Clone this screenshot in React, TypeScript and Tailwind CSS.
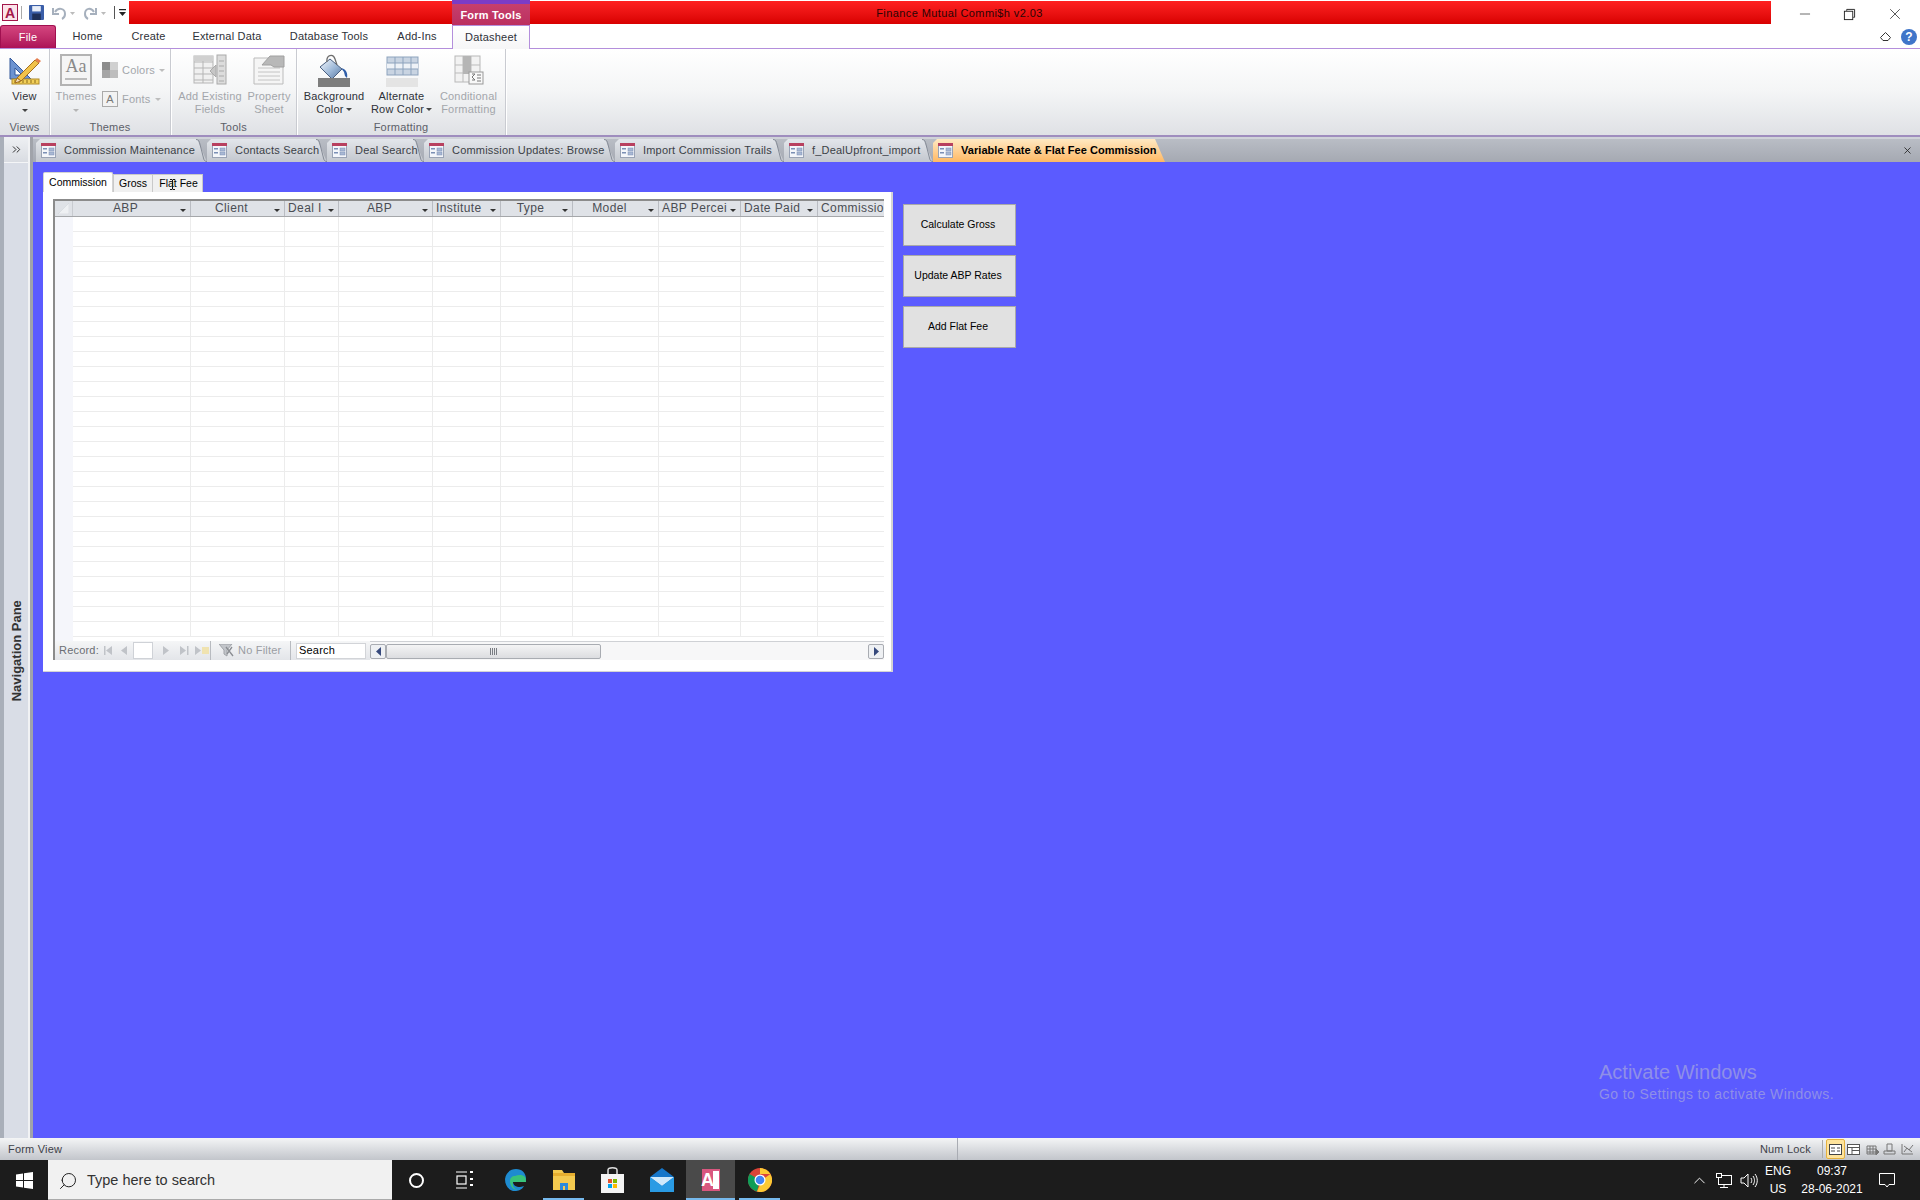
import { ChevronUp, ChevronsRight, Search as SearchIcon, X, Minus } from "lucide-react";

const font = "font-['Liberation_Sans',sans-serif]";

const docTabs = [
  { label: "Commission Maintenance", width: "w-[171px]" },
  { label: "Contacts Search", width: "w-[120px]" },
  { label: "Deal Search", width: "w-[97px]" },
  { label: "Commission Updates: Browse", width: "w-[191px]" },
  { label: "Import Commission Trails", width: "w-[169px]" },
  { label: "f_DealUpfront_import", width: "w-[149px]" },
];

const columns = [
  { label: "ABP", width: "w-[118px]", center: true, arrow: true },
  { label: "Client", width: "w-[94px]", center: true, arrow: true },
  { label: "Deal I", width: "w-[54px]", center: false, arrow: true },
  { label: "ABP", width: "w-[94px]", center: true, arrow: true },
  { label: "Institute", width: "w-[68px]", center: false, arrow: true },
  { label: "Type", width: "w-[72px]", center: true, arrow: true },
  { label: "Model", width: "w-[86px]", center: true, arrow: true },
  { label: "ABP Percei", width: "w-[82px]", center: false, arrow: true },
  { label: "Date Paid", width: "w-[77px]", center: false, arrow: true },
  { label: "Commissio", width: "w-[66px]", center: false, arrow: false },
];

const rows = Array.from({ length: 28 }, (_, i) => i);

function FormIcon() {
  return (
    <svg width="15" height="15" viewBox="0 0 15 15" className="shrink-0">
      <rect x="0.5" y="0.5" width="14" height="14" fill="#f4f6fa" stroke="#9aa3b5" />
      <rect x="0" y="0" width="15" height="3" fill="#b8405f" />
      <rect x="2" y="5" width="4" height="1.5" fill="#7b8fb5" />
      <rect x="2" y="9" width="4" height="1.5" fill="#7b8fb5" />
      <rect x="8" y="5" width="5" height="3" fill="#a9b8d4" stroke="#7b8fb5" strokeWidth="0.5" />
      <rect x="8" y="9" width="5" height="3" fill="#a9b8d4" stroke="#7b8fb5" strokeWidth="0.5" />
    </svg>
  );
}

function SmallDown({ color = "#444" }: { color?: string }) {
  return (
    <svg width="6" height="3" viewBox="0 0 6 3" className="shrink-0">
      <path d="M0 0h6L3 3z" fill={color} />
    </svg>
  );
}

function DocTab({ label, width }: { label: string; width: string }) {
  return (
    <div className={`relative h-[23px] ${width} shrink-0`}>
      <div className="flex h-full items-center gap-[8px] bg-gradient-to-b from-[#e3e6eb] to-[#c3c7ce] pl-[5px] [clip-path:polygon(4px_0,calc(100%-10px)_0,100%_100%,0_100%,0_4px)]">
        <FormIcon />
        <span className="whitespace-nowrap text-[#3b3f46]">{label}</span>
      </div>
      <svg className="absolute right-0 top-0 h-full w-[11px]" viewBox="0 0 11 23">
        <path d="M0 .5c2 0 3 1 3.500 3l4 15.500c.5 2.500 1.500 3.500 3.500 3.500" fill="none" stroke="#858b96" />
      </svg>
    </div>
  );
}

function RibbonText({ lines, muted }: { lines: string[]; muted?: boolean }) {
  return (
    <div className={`flex flex-col items-center leading-[13px] ${muted ? "text-[#a3a6ab]" : "text-[#2e3138]"}`}>
      {lines.map((l) => (
        <span key={l} className="whitespace-nowrap">{l}</span>
      ))}
    </div>
  );
}

function RibbonGroup({ label, width, children }: { label: string; width: string; children: React.ReactNode }) {
  return (
    <div className={`flex h-full ${width} shrink-0 flex-col border-r border-[#c9cbd1] shadow-[1px_0_0_#fff]`}>
      <div className="flex h-[70px] items-start">{children}</div>
      <div className="flex h-[16px] items-center justify-center text-[#5c6068]">{label}</div>
    </div>
  );
}

function ViewIcon() {
  return (
    <svg width="32" height="30" viewBox="0 0 32 30">
      <path d="M1 3v21h21z" fill="#6c93d1" stroke="#33589b" />
      <path d="M6 13v7h7z" fill="#fff" stroke="#33589b" />
      <rect x="3" y="24" width="27" height="5" fill="#f2cf58" stroke="#b08a27" />
      <path d="M6 25v3M10 25v3M14 25v3M18 25v3M22 25v3M26 25v3" stroke="#8a6a1b" />
      <path d="M8 23 26 5l4 3-18 18z" fill="#f0c24a" stroke="#a66f1c" />
      <path d="M26 5l2-2 4 3-2 2z" fill="#e57d4e" />
      <path d="M8 23l-2 5 6-2z" fill="#f4dfbe" stroke="#a66f1c" />
    </svg>
  );
}

function AddFieldsIcon() {
  return (
    <svg width="34" height="32" viewBox="0 0 34 32">
      <rect x="1" y="2" width="19" height="27" fill="#f0f0f0" stroke="#b5b5b5" />
      <path d="M1 8h19M1 14h19M1 20h19M1 26h19M10 2v27" stroke="#b5b5b5" />
      <rect x="1" y="2" width="19" height="5" fill="#d0d0d0" />
      <rect x="24" y="1" width="9" height="29" fill="#dcdcdc" stroke="#aaa" />
      <path d="M26 7h5M26 12h5M26 17h5M26 22h5M26 27h5" stroke="#aaa" />
      <path d="M23 11v12l-6-6z" fill="#c6c6c6" stroke="#aaa" />
    </svg>
  );
}

function PropertySheetIcon() {
  return (
    <svg width="32" height="32" viewBox="0 0 32 32">
      <path d="M1 4h29v26H1z" fill="#f5f5f5" stroke="#bbb" />
      <path d="M5 14h22M5 18h22M5 22h22M5 26h22" stroke="#c4c4c4" />
      <path d="M9 11 17 2h14v11H21l-3-2z" fill="#b8b8b8" stroke="#a0a0a0" />
    </svg>
  );
}

function BucketIcon() {
  return (
    <svg width="34" height="33" viewBox="0 0 34 33">
      <defs>
        <linearGradient id="bucket" x1="0" y1="0" x2="1" y2="1">
          <stop offset="0" stopColor="#f5f8fc" />
          <stop offset="0.55" stopColor="#9db8d8" />
          <stop offset="1" stopColor="#54749f" />
        </linearGradient>
      </defs>
      <path d="M24 14c5 1 7 5 6 10l-2-2-1-4z" fill="#2f5ea8" />
      <path d="M3 13 13 5l12 10-10 10z" fill="url(#bucket)" stroke="#4a5f80" />
      <path d="M10 8C9 1 16-1 18 5l2 6" fill="none" stroke="#6d6d6d" strokeWidth="1.300" />
      <rect x="1" y="24" width="32" height="9" fill="#7d7d7d" />
    </svg>
  );
}

function AltRowIcon() {
  return (
    <svg width="34" height="33" viewBox="0 0 34 33">
      <rect x="2" y="3" width="31" height="18" fill="#c9d4e2" stroke="#8da3bd" />
      <rect x="2" y="9" width="31" height="6" fill="#eef2f7" />
      <path d="M2 9h31M2 15h31M10 3v18M18 3v18M26 3v18" stroke="#8da3bd" />
      <rect x="1" y="24" width="32" height="9" fill="#e4e4e4" />
    </svg>
  );
}

function ConditionalIcon() {
  return (
    <svg width="30" height="30" viewBox="0 0 30 30">
      <rect x="1" y="1" width="25" height="26" fill="#f2f2f2" stroke="#b8b8b8" />
      <path d="M1 10h25M1 18h25M9 1v26M17 1v26" stroke="#bbb" />
      <rect x="9" y="1" width="8" height="18" fill="#b5b5b5" />
      <rect x="15" y="17" width="14" height="12" fill="#f8f8f8" stroke="#999" />
      <path d="M18 19h3l-3 3 3 3h-3M23 20h4M23 23h4M23 26h4" fill="none" stroke="#777" />
    </svg>
  );
}

function ThemesIcon() {
  return (
    <div className="flex h-[32px] w-[32px] flex-col items-center justify-start border-2 border-[#b3b3b3] bg-[#f5f5f5] font-['Liberation_Serif',serif] text-[18px] leading-[21px] tracking-normal text-[#8a8a8a]">
      Aa
      <div className="mt-[1px] h-[2px] w-[22px] bg-[#bdbdbd]" />
    </div>
  );
}

function IconBox({ children }: { children: React.ReactNode }) {
  return <div className="flex h-[36px] items-start justify-center">{children}</div>;
}

function Ribbon() {
  return (
    <div className="flex h-[86px] bg-gradient-to-b from-[#ffffff] via-[#f4f5f6] to-[#dfe1e5]">
      <RibbonGroup label="Views" width="w-[50px]">
        <div className="flex w-[49px] flex-col items-center pt-[6px]">
          <div className="h-[35px]"><ViewIcon /></div>
          <div className="leading-[13px] text-[#2e3138]">View</div>
          <div className="mt-[6px]"><SmallDown /></div>
        </div>
      </RibbonGroup>
      <RibbonGroup label="Themes" width="w-[121px]">
        <div className="flex w-[52px] flex-col items-center pt-[5px]">
          <IconBox><ThemesIcon /></IconBox>
          <div className="leading-[13px] text-[#a3a6ab]">Themes</div>
          <div className="mt-[6px]"><SmallDown color="#b5b5b5" /></div>
        </div>
        <div className="flex flex-col gap-[13px] pt-[13px] leading-[16px] text-[#a3a6ab]">
          <div className="flex items-center gap-[4px]">
            <span className="grid h-[16px] w-[16px] grid-cols-2 grid-rows-2">
              <i className="bg-[#8c8c8c]" /><i className="bg-[#d0d0d0]" /><i className="bg-[#a6a6a6]" /><i className="bg-[#bdbdbd]" />
            </span>
            Colors <SmallDown color="#bdbdbd" />
          </div>
          <div className="flex items-center gap-[4px]">
            <span className="flex h-[16px] w-[16px] items-center justify-center border border-[#aaa] bg-[#f2f2f2] text-[#777]">A</span>
            Fonts <SmallDown color="#bdbdbd" />
          </div>
        </div>
      </RibbonGroup>
      <RibbonGroup label="Tools" width="w-[126px]">
        <div className="flex w-[78px] flex-col items-center pt-[5px]">
          <IconBox><AddFieldsIcon /></IconBox>
          <RibbonText lines={["Add Existing", "Fields"]} muted />
        </div>
        <div className="flex w-[40px] flex-col items-center pt-[5px]">
          <IconBox><PropertySheetIcon /></IconBox>
          <RibbonText lines={["Property", "Sheet"]} muted />
        </div>
      </RibbonGroup>
      <RibbonGroup label="Formatting" width="w-[209px]">
        <div className="flex w-[74px] flex-col items-center pt-[5px]">
          <IconBox><BucketIcon /></IconBox>
          <div className="flex flex-col items-center leading-[13px] text-[#2e3138]">
            <span className="whitespace-nowrap">Background</span>
            <span className="flex items-center gap-[2px]">Color <SmallDown /></span>
          </div>
        </div>
        <div className="flex w-[61px] flex-col items-center pt-[5px]">
          <IconBox><AltRowIcon /></IconBox>
          <div className="flex flex-col items-center leading-[13px] text-[#2e3138]">
            <span className="whitespace-nowrap">Alternate</span>
            <span className="flex items-center gap-[2px] whitespace-nowrap">Row Color <SmallDown /></span>
          </div>
        </div>
        <div className="flex w-[73px] flex-col items-center pt-[6px]">
          <div className="h-[35px]"><ConditionalIcon /></div>
          <RibbonText lines={["Conditional", "Formatting"]} muted />
        </div>
      </RibbonGroup>
    </div>
  );
}

function TitleRow() {
  return (
    <div className="flex h-[25px] items-start bg-white">
      <div className="flex h-[25px] w-[129px] shrink-0 items-center pl-[2px]">
        <span className="flex h-[17px] w-[16px] items-center justify-center border border-[#a3174a] bg-[#fbe3ea] text-[14px] font-bold leading-none tracking-normal text-[#a3174a]">A</span>
        <span className="ml-[3px] h-[13px] w-px bg-[#aaa]" />
        <svg className="ml-[7px]" width="15" height="15" viewBox="0 0 14 14"><rect width="14" height="14" rx="1" fill="#3a5ea8" /><rect x="3" y="1" width="8" height="5" fill="#e8eef8" /><rect x="3" y="8" width="8" height="6" fill="#1e2f57" /></svg>
        <svg className="ml-[8px]" width="24" height="14" viewBox="0 0 24 14"><path d="M3 6c3-5 10-4 10 2 0 2-1 4-3 5M1 2v6h6" fill="none" stroke="#a6b0bd" strokeWidth="2" /><path d="M18 6h5l-2.500 3z" fill="#bbb" /></svg>
        <svg className="ml-[7px]" width="24" height="14" viewBox="0 0 24 14"><path d="M11 6C8 1 2 2 2 8c0 2 1 4 3 5M13 2v6H7" fill="none" stroke="#a6b0bd" strokeWidth="2" /><path d="M18 6h5l-2.500 3z" fill="#bbb" /></svg>
        <span className="ml-[7px] h-[13px] w-px bg-[#555]" />
        <svg className="ml-[4px]" width="7" height="8" viewBox="0 0 7 8"><path d="M0 0h7v1.300H0zM0 3h7L3.500 7z" fill="#222" /></svg>
      </div>
      <div className="mt-[1px] flex h-[23px] w-[323px] shrink-0 bg-gradient-to-b from-[#ff2020] to-[#d80000]" />
      <div className="flex h-[25px] w-[78px] shrink-0 flex-col bg-gradient-to-b from-[#c8426f] to-[#bb2f5f]">
        <div className="h-[4px] bg-[#7b3cc6]" />
        <div className="flex flex-1 items-center justify-center pt-[2px] font-bold text-white">Form Tools</div>
      </div>
      <div className="mt-[1px] flex h-[23px] w-[1241px] shrink-0 items-center justify-center bg-gradient-to-b from-[#ff2020] to-[#d80000] pr-[382px] pt-[1px] tracking-[0.4px] text-[#2a0505]">
        Finance Mutual Commi$h v2.03
      </div>
      <div className="flex flex-1 items-center justify-end gap-[30px] pr-[16px] pt-[5px] text-[#222]">
        <Minus size={16} strokeWidth={1} />
        <svg width="13" height="13" viewBox="0 0 14 14" fill="none" stroke="#222"><rect x="1.500" y="3.500" width="9" height="9" /><path d="M4 3V1.500h8.500V10H11" /></svg>
        <X size={18} strokeWidth={1} />
      </div>
    </div>
  );
}

function MenuRow() {
  const items = [
    { label: "Home", width: "w-[63px]" },
    { label: "Create", width: "w-[59px]" },
    { label: "External Data", width: "w-[98px]" },
    { label: "Database Tools", width: "w-[106px]" },
    { label: "Add-Ins", width: "w-[70px]" },
  ];
  return (
    <div className="flex h-[24px] items-stretch border-b border-[#b48fdc] bg-white text-[#2e3138]">
      <div className="flex w-[56px] items-center justify-center rounded-t-[3px] border border-b-0 border-[#a01050] bg-gradient-to-b from-[#d4447f] to-[#ad1057] text-white">File</div>
      {items.map((t) => (
        <div key={t.label} className={`flex ${t.width} items-center justify-center`}>{t.label}</div>
      ))}
      <div className="-mb-px flex w-[78px] items-center justify-center border-x border-t border-[#b48fdc] bg-gradient-to-b from-[#ffffff] to-[#f6f6f7]">Datasheet</div>
      <div className="flex flex-1 items-center justify-end gap-[10px] pr-[3px]">
        <svg width="11" height="9" viewBox="0 0 11 9" fill="none" stroke="#333"><path d="M.500 5.500l5-5 5 5-2.500 3H3z" /></svg>
        <span className="flex h-[16px] w-[16px] items-center justify-center rounded-full bg-[#3f75c9] text-[12px] font-bold text-white">?</span>
      </div>
    </div>
  );
}

function TabStrip() {
  return (
    <div className="flex h-[23px] items-stretch bg-gradient-to-b from-[#b9bdc5] to-[#a5a9b2] pl-[3px]">
      {docTabs.map((t) => (
        <DocTab key={t.label} label={t.label} width={t.width} />
      ))}
      <div className="relative h-[23px] w-[232px] shrink-0">
        <div className="flex h-full items-center gap-[8px] bg-gradient-to-b from-[#ffe9c2] to-[#ffb861] pl-[5px] [clip-path:polygon(4px_0,calc(100%-10px)_0,100%_100%,0_100%,0_4px)]">
          <FormIcon />
          <span className="whitespace-nowrap font-bold tracking-[0.05px] text-black">Variable Rate &amp; Flat Fee Commission</span>
        </div>
      </div>
      <div className="flex flex-1 items-center justify-end pr-[7px] text-[#222]">
        <X size={11} strokeWidth={1.8} />
      </div>
    </div>
  );
}

function NavPane() {
  return (
    <div className="flex w-[33px] shrink-0 flex-col border-r-[3px] border-[#a0a3aa] bg-[#d9dde6] shadow-[inset_4px_0_0_#a9afb9,inset_-2px_0_0_#f1f2f4]">
      <div className="ml-[4px] flex h-[26px] w-[24px] items-center justify-center border-b border-[#f4f5f7] bg-gradient-to-b from-[#eef0f3] to-[#d9dce2] text-[#222]">
        <ChevronsRight size={13} strokeWidth={1.7} />
      </div>
      <div className="flex flex-1 items-center justify-center pl-[3px]">
        <span className="-rotate-90 whitespace-nowrap text-[13px] font-bold tracking-normal text-[#333]">Navigation Pane</span>
      </div>
    </div>
  );
}

function Datasheet() {
  return (
    <div className="flex h-[461px] flex-col border-l-2 border-t-2 border-[#8b8b8b]">
      <div className="flex h-[16px] shrink-0 border-b border-[#a5a7aa] bg-[#dfe2e7] text-[12px] leading-[15px] tracking-[0.4px] text-[#4a4d53]">
        <div className="relative w-[18px] shrink-0 border-r border-[#c8cbd0]">
          <svg className="absolute left-[3px] top-[2px]" width="11" height="11" viewBox="0 0 11 11"><path d="M11 0v11H0z" fill="#eef0f3" stroke="#cfd2d7" strokeWidth="0.5" /></svg>
        </div>
        {columns.map((c, i) => (
          <div key={i} className={`flex ${c.width} shrink-0 items-center overflow-hidden border-r border-[#b9bcc2] pl-[3px] pr-[4px] last:border-r-0`}>
            <span className={`flex-1 whitespace-nowrap ${c.center ? "pr-[5px] text-center" : ""}`}>{c.label}</span>
            {c.arrow && <div className="pt-[3px]"><SmallDown color="#333" /></div>}
          </div>
        ))}
      </div>
      <div className="flex min-h-0 flex-1 overflow-hidden">
        <div className="w-[18px] shrink-0 bg-[#f5f6fb]" />
        <div className="min-w-0 flex-1">
          {rows.map((r) => (
            <div key={r} className="flex h-[15px] border-b border-[#ececec]">
              {columns.map((c, i) => (
                <div key={i} className={`${c.width} shrink-0 border-r border-[#ececec] last:border-r-0`} />
              ))}
            </div>
          ))}
        </div>
      </div>
      <RecordBar />
    </div>
  );
}

function RecordBar() {
  return (
    <div className="flex h-[19px] shrink-0 items-center bg-gradient-to-b from-[#f5f6f7] to-[#e3e5e9] text-[#6b6e74]">
      <span className="w-[49px] pl-[4px]">Record:</span>
      <svg width="24" height="9" viewBox="0 0 24 9" fill="#c0c3c8"><path d="M0 0h1.500v9H0zM8 0v9L2 4.500zM23 0v9l-6-4.500z" /></svg>
      <div className="ml-[5px] mr-[10px] h-[17px] w-[20px] border border-[#cfd2d7] bg-white" />
      <svg width="46" height="9" viewBox="0 0 46 9" fill="#c0c3c8"><path d="M0 0v9l6-4.500zM17 0v9l6-4.500zM24 0h1.500v9H24zM32 0v9l6-4.500z" /><rect x="39" y="1" width="7" height="7" fill="#f0e3b0" /></svg>
      <div className="ml-px flex h-full w-[81px] items-center gap-[4px] border-x border-[#b8bbc0] pl-[8px] text-[#9a9da3]">
        <svg width="15" height="13" viewBox="0 0 15 13"><path d="M0 0h13L8 6v6L5 10V6z" fill="#c2c5ca" stroke="#a0a3a8" /><path d="M7 3l7 9M13 3l-5 7" stroke="#8a8d92" strokeWidth="1.300" /></svg>
        No Filter
      </div>
      <div className="ml-[5px] flex h-[16px] w-[70px] items-center border border-[#d2d4d8] bg-white pl-[2px] text-black">Search</div>
      <div className="ml-[4px] flex h-full flex-1 items-center border-t border-[#cfd1d5] bg-[#f7f7f8]">
        <div className="flex h-[15px] w-[16px] shrink-0 items-center justify-center rounded-[2px] border border-[#a9acb2] bg-[#eef0f3]">
          <svg width="5" height="9" viewBox="0 0 5 9"><path d="M5 0v9L0 4.500z" fill="#36497c" /></svg>
        </div>
        <div className="flex h-[15px] w-[215px] shrink-0 items-center justify-center rounded-[2px] border border-[#a9acb2] bg-gradient-to-b from-[#f4f4f5] to-[#dcdde0]">
          <svg width="8" height="7" viewBox="0 0 8 7" stroke="#7a7d83"><path d="M.500 0v7M2.500 0v7M4.500 0v7M6.500 0v7" /></svg>
        </div>
        <div className="flex-1" />
        <div className="flex h-[15px] w-[16px] shrink-0 items-center justify-center rounded-[2px] border border-[#a9acb2] bg-[#eef0f3]">
          <svg width="5" height="9" viewBox="0 0 5 9"><path d="M0 0v9l5-4.500z" fill="#36497c" /></svg>
        </div>
      </div>
    </div>
  );
}

function FormTabs() {
  return (
    <div className="flex h-[20px] items-end text-[10.500px] tracking-normal text-black">
      <div className="flex h-[20px] w-[70px] items-center justify-center rounded-t-[2px] border border-b-0 border-[#d4d4d4] bg-white">Commission</div>
      <div className="flex h-[18px] w-[40px] items-center justify-center border border-b-0 border-[#c9c9c9] bg-[#f0f0f0] pt-[1px]">Gross</div>
      <div className="relative flex h-[18px] w-[50px] items-center justify-center border border-b-0 border-l-0 border-[#c9c9c9] bg-[#f0f0f0] pl-[2px] pt-[1px]">
        Flat Fee
        <svg className="absolute left-[17px] top-[4px]" width="5" height="11" viewBox="0 0 5 11" fill="none" stroke="#111"><path d="M0 .5h2l.5.500.5-.500h2M2.500 1v9M0 10.500h2l.5-.500.5.500h2" /></svg>
      </div>
    </div>
  );
}

function ActionButton({ label }: { label: string }) {
  return (
    <button className="flex h-[42px] w-[113px] items-center justify-center border border-[#a9a9a9] bg-[#e1e1e1] pr-[3px] text-[10.500px] tracking-normal text-black">{label}</button>
  );
}

function TaskIcon({ children, active, underline }: { children: React.ReactNode; active?: boolean; underline?: boolean }) {
  return (
    <div className={`relative flex w-[49px] items-center justify-center ${active ? "bg-[#4a4a4a]" : ""}`}>
      {children}
      {underline && <span className={`absolute bottom-0 h-[2px] bg-[#76b9ed] ${active ? "inset-x-0" : "inset-x-[4px]"}`} />}
    </div>
  );
}

function Taskbar() {
  return (
    <div className="flex h-[40px] items-stretch bg-[#1c1c1c] tracking-normal text-white">
      <div className="flex w-[48px] items-center justify-center">
        <svg width="17" height="17" viewBox="0 0 17 17" fill="#fff"><path d="M0 2.400 7 1.400v6.600H0zM8 1.300 17 0v8H8zM0 9h7v6.600l-7-1zM8 9h9v8l-9-1.300z" /></svg>
      </div>
      <div className="flex w-[344px] items-center gap-[9px] border-b border-[#aaa] bg-[#f1f1f1] pl-[10px] pt-[3px] text-[14.500px] text-[#333]">
        <SearchIcon size={20} strokeWidth={1.2} className="-scale-x-100 text-[#222]" />
        Type here to search
      </div>
      <div className="flex w-[48px] items-center justify-center">
        <span className="h-[15px] w-[15px] rounded-full border-[2.500px] border-white" />
      </div>
      <div className="mr-[2px] flex w-[48px] items-center justify-center">
        <svg width="17" height="18" viewBox="0 0 17 18" fill="none" stroke="#fff" strokeWidth="1.200"><path d="M0 1h11M0 17h11" /><rect x="1" y="5" width="9" height="8" /><path d="M14 1h3M14 8h3M14 14h3" strokeWidth="2" /></svg>
      </div>
      <TaskIcon>
        <svg width="24" height="24" viewBox="0 0 24 24"><path d="M2 11C3 4 8 1 13 1c6 0 10 4 10 10 0 2-2 3-5 3H10c0 3 3 5 7 5 2 0 3-1 4-1-2 4-6 5-9 5-6 0-10-5-10-12z" fill="#1e8bd0" /><path d="M12 8c-3 0-5 2-5 5 0 5 3 9 8 9-4-1-6-4-5-8h13c0-2 0-3-1-5-3-3-7-2-10-1z" fill="#39c37a" /></svg>
      </TaskIcon>
      <TaskIcon underline>
        <svg width="24" height="22" viewBox="0 0 24 22"><path d="M1 1h9l2 3h11v17H1z" fill="#f3c94f" /><rect x="1" y="4" width="22" height="3" fill="#e6ae2f" /><path d="M8 21v-7h8v7h-3v-4h-2v4z" fill="#2b89d9" /></svg>
      </TaskIcon>
      <TaskIcon>
        <svg width="24" height="26" viewBox="0 0 24 26"><rect y="7" width="23" height="19" fill="#f4f4f4" /><path d="M7 7V3c0-3 9-3 9 0v4" fill="none" stroke="#ddd" strokeWidth="1.500" /><rect x="7" y="12" width="4" height="4" fill="#e2522f" /><rect x="12" y="12" width="4" height="4" fill="#7fba00" /><rect x="7" y="17" width="4" height="4" fill="#00a4ef" /><rect x="12" y="17" width="4" height="4" fill="#ffb900" /></svg>
      </TaskIcon>
      <TaskIcon>
        <svg width="24" height="24" viewBox="0 0 24 24"><path d="M0 9 12 0l12 9v15H0z" fill="#1576c9" /><path d="M0 9h24l-12 9z" fill="#cfe9fb" /><path d="M0 9l12 9 12-9v15H0z" fill="#2a9be4" /></svg>
      </TaskIcon>
      <TaskIcon active underline>
        <svg width="22" height="24" viewBox="0 0 22 24"><rect x="2" y="1" width="18" height="22" fill="#d9577f" /><rect x="13" y="3" width="6" height="18" fill="#fff" /><text x="1" y="18" fontFamily="Liberation Sans" fontSize="18" fontWeight="700" fill="#fff">A</text></svg>
      </TaskIcon>
      <TaskIcon underline>
        <svg width="24" height="24" viewBox="0 0 24 24"><circle cx="12" cy="12" r="12" fill="#db4437" /><path d="M12 12 1.500 6A12 12 0 0 0 9 23.600z" fill="#0f9d58" /><path d="M12 0a12 12 0 0 1 10.400 6H12zM22.400 6A12 12 0 0 1 9 23.600L14 12z" fill="#fcc934" /><circle cx="12" cy="12" r="5.500" fill="#fff" /><circle cx="12" cy="12" r="4.300" fill="#4285f4" /></svg>
      </TaskIcon>
      <div className="flex-1" />
      <div className="flex items-center pr-[25px]">
        <ChevronUp size={19} strokeWidth={1.2} />
        <svg className="ml-[7px]" width="16" height="15" viewBox="0 0 16 15" fill="none" stroke="#fff"><rect x="2.500" y="2.500" width="13" height="9" /><path d="M8 12v2M4 14.500h8" /><rect x="0.500" y="0.500" width="5" height="4" fill="#1c1c1c" /></svg>
        <svg className="ml-[8px]" width="18" height="15" viewBox="0 0 18 15" fill="none" stroke="#fff"><path d="M1 5h3l4-4v13l-4-4H1zM11 5c1 2 1 3 0 5M13 3c2 3 2 6 0 9M15 1c3 4 3 9 0 13" /></svg>
        <div className="ml-[5px] flex w-[30px] flex-col items-center text-[12px] leading-[18px]">
          <span>ENG</span>
          <span>US</span>
        </div>
        <div className="ml-[2px] flex w-[74px] flex-col items-center text-[12px] leading-[18px]">
          <span>09:37</span>
          <span>28-06-2021</span>
        </div>
        <svg className="ml-[10px]" width="16" height="15" viewBox="0 0 16 15" fill="none" stroke="#fff"><path d="M.500.500h15v11H10L8 14l-2-2.500H.500z" /></svg>
      </div>
    </div>
  );
}

function StatusBar() {
  return (
    <div className="flex h-[22px] items-center bg-gradient-to-b from-[#f4f5f6] to-[#c2c5cb] text-[#3e4148]">
      <span className="flex h-full w-[958px] items-center border-r border-[#a9acb3] pl-[8px]">Form View</span>
      <div className="flex-1" />
      <span className="pr-[11px]">Num Lock</span>
      <div className="mr-[3px] h-[18px] w-px bg-[#aaa]" />
      <div className="flex items-center pr-[6px]">
        <span className="flex h-[20px] w-[19px] items-center justify-center rounded-[2px] border border-[#e5b13e] bg-[#ffe49c]">
          <svg width="13" height="11" viewBox="0 0 13 11" fill="none" stroke="#444"><rect x=".500" y=".500" width="12" height="10" fill="#fff" /><path d="M2 4h4M2 7h4M8 4h3M8 7h3" /></svg>
        </span>
        <svg className="ml-[2px]" width="13" height="11" viewBox="0 0 13 11" fill="none" stroke="#555"><rect x=".500" y=".500" width="12" height="10" fill="#fff" /><path d="M1 3.500h11M5 3v7M5 6.500h7" /></svg>
        <svg className="ml-[6px]" width="13" height="12" viewBox="0 0 13 12" fill="none" stroke="#777"><path d="M1 3h9v8H1zM1 6h9M1 9h9M4 3v8M7 3v8" /><path d="M10 6l3 3-3 3z" fill="#777" /></svg>
        <svg className="ml-[4px]" width="13" height="12" viewBox="0 0 13 12" fill="none" stroke="#777"><path d="M4 1h5v7H4zM1 8h11v3H1z" /></svg>
        <svg className="ml-[5px]" width="13" height="12" viewBox="0 0 13 12" fill="none" stroke="#777"><path d="M1 1v10h11M3 9l3-4 2 2 4-5M3 3l8 6" /></svg>
      </div>
    </div>
  );
}

export default function App() {
  return (
    <div className={`relative flex h-[1200px] w-[1920px] flex-col overflow-hidden bg-[#5b5bff] text-[11px] tracking-[0.2px] ${font}`}>
      <TitleRow />
      <MenuRow />
      <Ribbon />
      <div className="h-[2px] bg-[#9f8dbe]" />
      <div className="flex min-h-0 flex-1">
        <NavPane />
        <div className="flex min-w-0 flex-1 flex-col">
          <div className="h-[2px] bg-[#cfd2d8]" />
          <TabStrip />
          <div className="flex flex-1 items-start gap-[10px] bg-[#5b5bff] pl-[10px] pt-[10px]">
            <div className="w-[850px] shrink-0">
              <FormTabs />
              <div className="h-[480px] border-b border-r-2 border-[#d4d4d4] bg-white pl-[10px] pr-[7px] pt-[7px]">
                <Datasheet />
              </div>
            </div>
            <div className="flex flex-col gap-[9px] pt-[32px]">
              <ActionButton label="Calculate Gross" />
              <ActionButton label="Update ABP Rates" />
              <ActionButton label="Add Flat Fee" />
            </div>
          </div>
        </div>
      </div>
      <StatusBar />
      <Taskbar />
      <div className="absolute left-[1599px] top-[1059px] text-[20px] leading-[26px] tracking-normal text-[#8f8fe8]">
        Activate Windows
        <div className="text-[14px] leading-[18px] tracking-[0.4px]">Go to Settings to activate Windows.</div>
      </div>
    </div>
  );
}
